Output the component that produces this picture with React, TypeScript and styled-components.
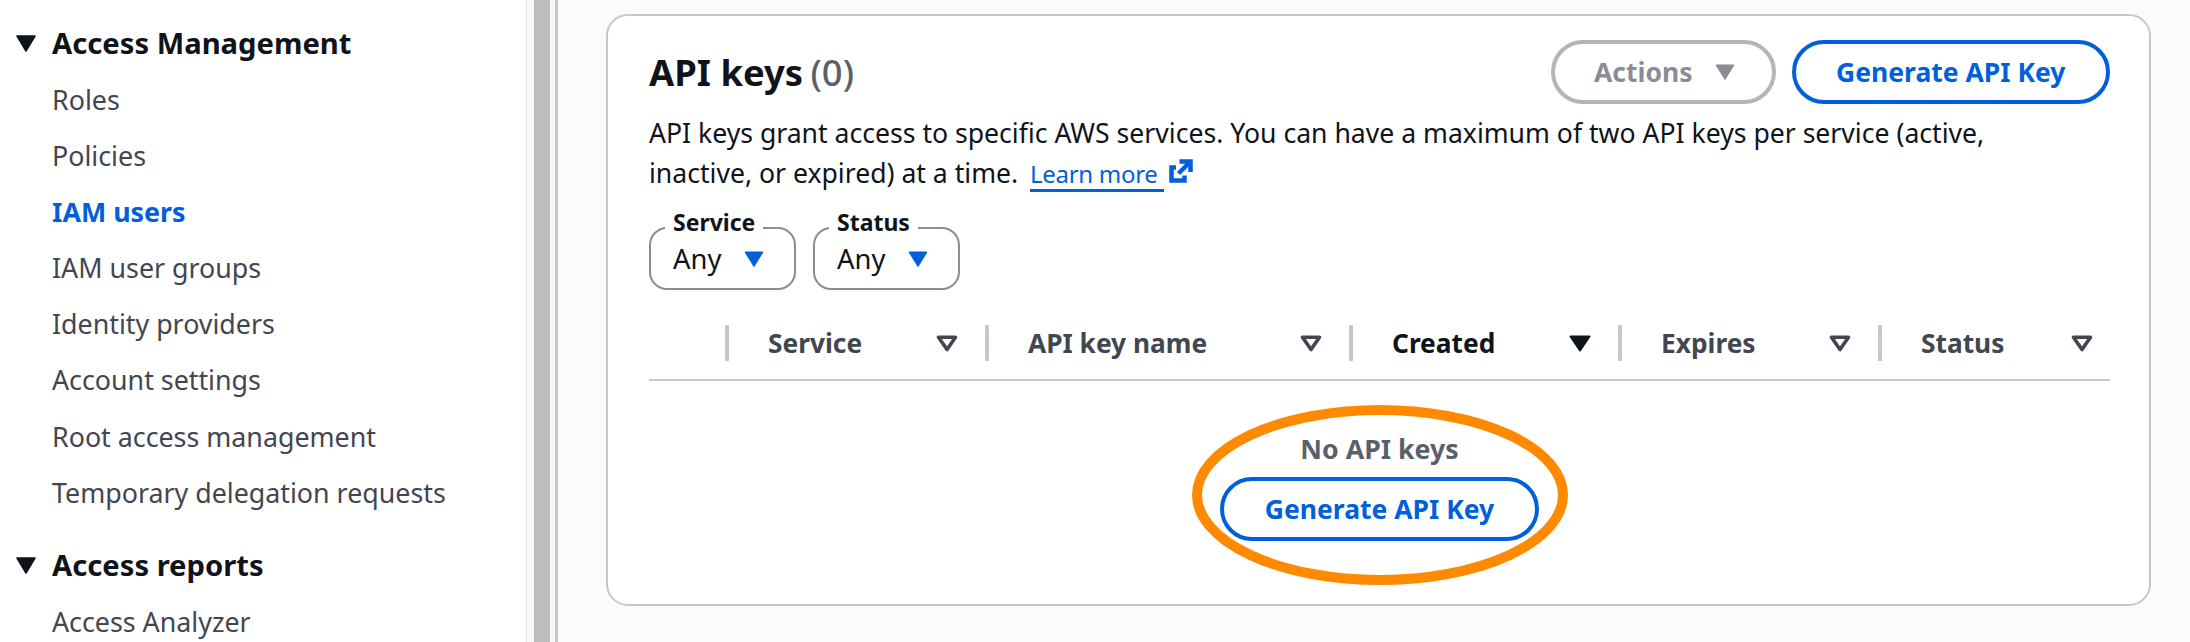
import styled, { createGlobalStyle } from "styled-components";

const Global = createGlobalStyle`
  html, body {
    margin: 0;
    padding: 0;
    height: 642px;
    overflow: hidden;
    background: #ffffff;
    font-family: "Noto Sans", "Liberation Sans", sans-serif;
  }
`;

const Page = styled.div`
  display: flex;
  width: 2190px;
  height: 642px;
  overflow: hidden;
`;

const Sidebar = styled.nav`
  width: 526px;
  flex-shrink: 0;
  padding: 15px 0 0 16px;
  box-sizing: border-box;
  background: #ffffff;
`;

const SectionHead = styled.div<{ $gap?: number }>`
  display: flex;
  align-items: center;
  height: 56.5px;
  margin-top: ${(p) => p.$gap ?? 0}px;
  font-size: 29.2px;
  font-weight: 700;
  color: #0f141a;
`;

const Caret = styled.svg`
  width: 20px;
  height: 17px;
  margin-right: 16px;
  fill: #0f141a;
`;

const NavItem = styled.div<{ $active?: boolean }>`
  height: 56.2px;
  line-height: 56.2px;
  padding-left: 36px;
  font-size: 26.8px;
  white-space: nowrap;
  font-weight: ${(p) => (p.$active ? 700 : 400)};
  color: ${(p) => (p.$active ? "#0060dc" : "#424650")};
`;

const Rail = styled.div`
  width: 32px;
  flex-shrink: 0;
  box-sizing: border-box;
  height: 642px;
  background: linear-gradient(
    to right,
    #e4e4e4 0 1.5px,
    #f8f8f8 1.5px 8px,
    #bdbdbd 8px 24px,
    #f8f8f8 24px 29px,
    #c6c6cd 29px 32px
  );
`;

const Main = styled.main`
  flex: 1;
  padding: 14px 39px 0 48px;
  background: #fbfbfe;
`;

const Panel = styled.section`
  position: relative;
  box-sizing: border-box;
  height: 592px;
  padding: 24px 39px 0 41px;
  background: #ffffff;
  border: 2px solid #c6c6cd;
  border-radius: 22px;
`;

const TitleRow = styled.div`
  display: flex;
  justify-content: space-between;
  align-items: center;
`;

const Title = styled.h2`
  margin: 0;
  font-size: 36.4px;
  font-weight: 700;
  color: #0f141a;
`;

const Count = styled.span`
  margin-left: -2px;
  font-weight: 500;
  color: #5b5f6a;
`;

const Actions = styled.div`
  display: flex;
  gap: 16px;
`;

const Pill = styled.button<{ $off?: boolean }>`
  display: inline-flex;
  align-items: center;
  justify-content: center;
  gap: 22px;
  height: 64px;
  padding: ${(p) => (p.$off ? "0 37px 0 39px" : "0 40.5px")};
  box-sizing: border-box;
  background: #ffffff;
  border: 4px solid ${(p) => (p.$off ? "#b4b4bb" : "#0060dc")};
  border-radius: 32px;
  font-family: inherit;
  font-size: 26.5px;
  font-weight: 700;
  color: ${(p) => (p.$off ? "#8c8c94" : "#0060dc")};
`;

const Description = styled.p`
  margin: 9px 0 0;
  font-size: 26.6px;
  line-height: 40px;
  color: #0f141a;
  white-space: nowrap;
`;

const LearnMore = styled.a`
  display: inline-block;
  line-height: 31px;
  margin-left: 5px;
  padding-right: 6px;
  font-size: 24px;
  letter-spacing: -0.3px;
  color: #0060dc;
  border-bottom: 3px solid #0060dc;
`;

const External = styled.svg`
  width: 24px;
  height: 24px;
  margin-left: 5px;
  vertical-align: 0;
`;

const Filters = styled.div`
  display: flex;
  gap: 17px;
  margin-top: 34px;
`;

const FilterBox = styled.div`
  position: relative;
  display: flex;
  align-items: center;
  justify-content: space-between;
  box-sizing: border-box;
  width: 147px;
  height: 63px;
  padding: 0 30px 0 22px;
  border: 2px solid #8c8c94;
  border-radius: 18px;
  font-size: 27.4px;
  color: #0f141a;
`;

const FilterLabel = styled.span`
  position: absolute;
  top: -23px;
  left: 14px;
  padding: 0 8px;
  line-height: 32px;
  background: #ffffff;
  font-size: 23px;
  font-weight: 700;
  color: #0f141a;
`;

const HeaderRow = styled.div`
  display: grid;
  grid-template-columns: 76px 260px 364px 269px 260px 1fr;
  margin-top: 35px;
  padding-bottom: 18px;
  border-bottom: 2px solid #c6c6cd;
`;

const HeaderCell = styled.div<{ $sorted?: boolean }>`
  display: flex;
  align-items: center;
  justify-content: space-between;
  box-sizing: border-box;
  height: 36px;
  padding: 0 27px 0 39px;
  border-left: 4px solid #c6c6cd;
  font-size: 26.3px;
  font-weight: 700;
  color: ${(p) => (p.$sorted ? "#0f141a" : "#424650")};

  &:last-child {
    padding-right: 17px;
  }
`;

const BlankCell = styled.div`
  height: 36px;
`;

const SortIcon = styled.svg`
  width: 22px;
  height: 17px;
  flex-shrink: 0;
`;

const Empty = styled.div`
  display: flex;
  flex-direction: column;
  align-items: center;
  padding-top: 52px;
`;

const EmptyText = styled.div`
  margin-bottom: 12px;
  font-size: 26.7px;
  line-height: 32px;
  font-weight: 700;
  color: #5b5f6a;
`;

const Highlight = styled.svg`
  position: absolute;
  left: 584px;
  top: 389px;
  width: 376px;
  height: 180px;
  pointer-events: none;
`;

const navItems = [
  "Roles",
  "Policies",
  "IAM users",
  "IAM user groups",
  "Identity providers",
  "Account settings",
  "Root access management",
  "Temporary delegation requests",
];

const columns = [
  { label: "Service" },
  { label: "API key name" },
  { label: "Created", sorted: true },
  { label: "Expires" },
  { label: "Status" },
];

function Triangle({ color }: { color: string }) {
  return (
    <svg width="20" height="16" viewBox="0 0 20 16" style={{ flexShrink: 0 }}>
      <path d="M1 1h18L10 15.5z" fill={color} stroke={color} strokeWidth="1" strokeLinejoin="round" />
    </svg>
  );
}

function Sort({ sorted }: { sorted?: boolean }) {
  return (
    <SortIcon viewBox="0 0 22 17">
      {sorted ? (
        <path d="M1.5 1.5h19L11 15.5z" fill="#0f141a" stroke="#0f141a" strokeWidth="2" strokeLinejoin="round" />
      ) : (
        <path d="M2.5 2.2h17L11 14.5z" fill="none" stroke="#424650" strokeWidth="3.6" strokeLinejoin="round" />
      )}
    </SortIcon>
  );
}

export default function App() {
  return (
    <>
      <Global />
      <Page>
        <Sidebar>
          <SectionHead>
            <Caret viewBox="0 0 20 17">
              <path d="M1 1h18L10 16z" stroke="#0f141a" strokeWidth="1.5" strokeLinejoin="round" />
            </Caret>
            Access Management
          </SectionHead>
          {navItems.map((item) => (
            <NavItem key={item} $active={item === "IAM users"}>
              {item}
            </NavItem>
          ))}
          <SectionHead $gap={16}>
            <Caret viewBox="0 0 20 17">
              <path d="M1 1h18L10 16z" stroke="#0f141a" strokeWidth="1.5" strokeLinejoin="round" />
            </Caret>
            Access reports
          </SectionHead>
          <NavItem>Access Analyzer</NavItem>
        </Sidebar>
        <Rail />
        <Main>
          <Panel>
            <TitleRow>
              <Title>
                API keys <Count>(0)</Count>
              </Title>
              <Actions>
                <Pill $off>
                  Actions
                  <Triangle color="#8c8c94" />
                </Pill>
                <Pill>Generate API Key</Pill>
              </Actions>
            </TitleRow>
            <Description>
              API keys grant access to specific AWS services. You can have a maximum of two API keys per service (active,
              <br />
              inactive, or expired) at a time. <LearnMore>Learn more</LearnMore>
              <External viewBox="0 0 24 24">
                <path d="M7 8.5H2.5v13h13v-5" fill="none" stroke="#0060dc" strokeWidth="4.5" />
                <path d="M10.5 2.5H21.5V13M21 3 9.5 14.5" fill="none" stroke="#0060dc" strokeWidth="4.5" />
              </External>
            </Description>
            <Filters>
              <FilterBox>
                <FilterLabel>Service</FilterLabel>
                Any
                <Triangle color="#0060dc" />
              </FilterBox>
              <FilterBox>
                <FilterLabel>Status</FilterLabel>
                Any
                <Triangle color="#0060dc" />
              </FilterBox>
            </Filters>
            <HeaderRow>
              <BlankCell />
              {columns.map((col) => (
                <HeaderCell key={col.label} $sorted={col.sorted}>
                  {col.label}
                  <Sort sorted={col.sorted} />
                </HeaderCell>
              ))}
            </HeaderRow>
            <Empty>
              <EmptyText>No API keys</EmptyText>
              <Pill>Generate API Key</Pill>
            </Empty>
            <Highlight viewBox="0 0 376 180">
              <ellipse cx="188" cy="90" rx="183" ry="85" fill="none" stroke="#ff8a00" strokeWidth="10" />
            </Highlight>
          </Panel>
        </Main>
      </Page>
    </>
  );
}
